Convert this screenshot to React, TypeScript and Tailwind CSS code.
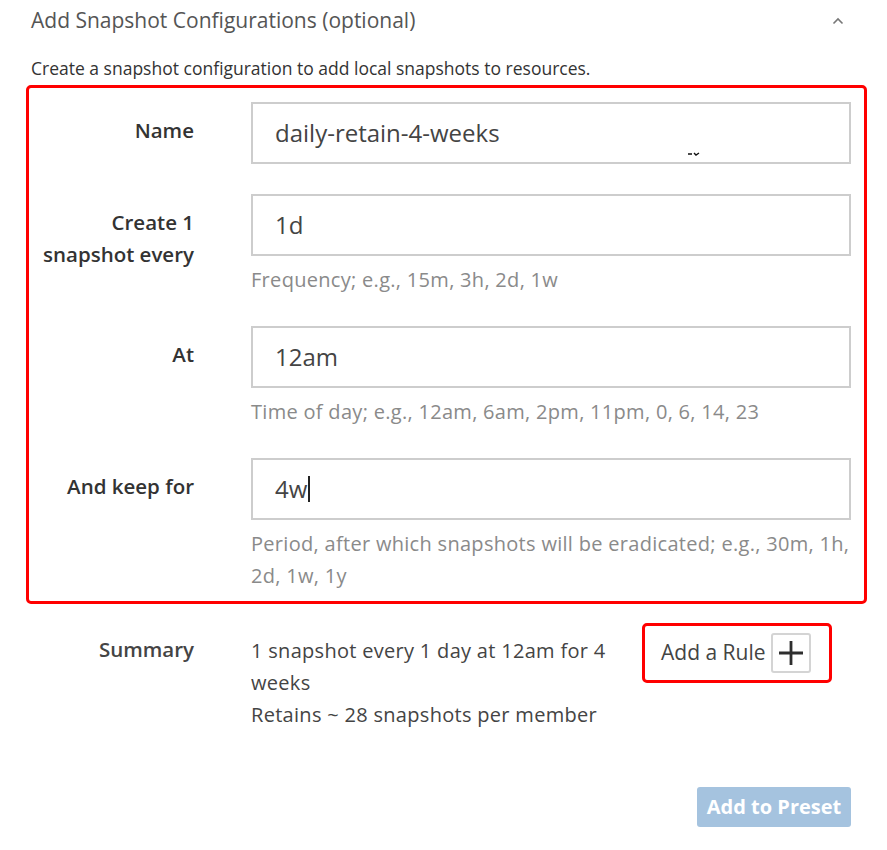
import React from "react"

const font = { fontFamily: "'Open Sans', 'Liberation Sans', sans-serif" }

function Field({
  label,
  value,
  help,
  caret,
  cursorMark,
}: {
  label: React.ReactNode
  value: string
  help?: React.ReactNode
  caret?: boolean
  cursorMark?: boolean
}) {
  return (
    <div className="flex">
      <div className="w-[165px] shrink-0 pt-[12px] text-right text-[20.5px] font-semibold leading-[32px] text-[#333]">
        {label}
      </div>
      <div className="ml-[57px] w-[600px]">
        <div className="relative flex h-[62px] items-center border-2 border-[#cdcdcd] bg-white pl-[22px] text-[24px] text-[#444]">
          <span>{value}</span>
          {caret && <span className="ml-[1px] inline-block h-[26px] w-[2px] bg-[#222]" />}
          {cursorMark && (
            <svg className="absolute left-[434px] top-[47px]" width="14" height="6" viewBox="0 0 14 6">
              <path d="M1 3h4M7 2l2 2 3-2" stroke="#111" strokeWidth="1.4" fill="none" />
            </svg>
          )}
        </div>
        {help && <div className="mt-[8px] text-[20px] leading-[32px] tracking-[0.3px] text-[#8a8a8a]">{help}</div>}
      </div>
    </div>
  )
}

export default function App() {
  return (
    <div className="min-h-[850px] w-[887px] bg-white" style={font}>
      {/* Header */}
      <div className="flex h-[42px] items-center justify-between pl-[31px] pr-[43px]">
        <div className="text-[21px] text-[#555]">Add Snapshot Configurations (optional)</div>
        <svg width="12" height="8" viewBox="0 0 12 8">
          <path d="M1.5 6.5L6 2l4.5 4.5" stroke="#777" strokeWidth="1.6" fill="none" />
        </svg>
      </div>
      <div className="mt-[15px] pl-[31px] text-[17.5px] leading-[22px] text-[#333]">
        Create a snapshot configuration to add local snapshots to resources.
      </div>

      {/* Rule form */}
      <div className="ml-[26px] mt-[6px] flex w-[841px] flex-col gap-[30px] rounded-[5px] border-[3px] border-[#ff0000] pb-[9px] pt-[14px]">
        <Field label="Name" value="daily-retain-4-weeks" cursorMark />
        <Field
          label={
            <>
              Create 1
              <br />
              snapshot every
            </>
          }
          value="1d"
          help="Frequency; e.g., 15m, 3h, 2d, 1w"
        />
        <Field label="At" value="12am" help="Time of day; e.g., 12am, 6am, 2pm, 11pm, 0, 6, 14, 23" />
        <Field
          label="And keep for"
          value="4w"
          caret
          help={
            <>
              Period, after which snapshots will be eradicated; e.g., 30m, 1h,
              <br />
              2d, 1w, 1y
            </>
          }
        />
      </div>

      {/* Summary */}
      <div className="mt-[19px] flex">
        <div className="w-[194px] shrink-0 pt-[10px] text-right text-[20.5px] font-semibold leading-[32px] text-[#444]">
          Summary
        </div>
        <div className="ml-[57px] w-[370px] pt-[12px] text-[20px] leading-[32px] tracking-[0.3px] text-[#444]">
          1 snapshot every 1 day at 12am for 4
          <br />
          weeks
          <br />
          Retains ~ 28 snapshots per member
        </div>
        <div className="ml-[21px] flex h-[60px] w-[190px] items-center rounded-[5px] border-[3px] border-[#ff0000] pl-[16px]">
          <span className="text-[21px] text-[#444]">Add a Rule</span>
          <button className="ml-[5px] flex h-[40px] w-[40px] items-center justify-center rounded-[3px] border-2 border-[#d4d4d4] bg-white">
            <svg width="26" height="26" viewBox="0 0 26 26">
              <path d="M13 1v24M1 13h24" stroke="#2e2e2e" strokeWidth="2.8" />
            </svg>
          </button>
        </div>
      </div>

      {/* Footer */}
      <div className="mt-[56px] flex justify-end pr-[36px]">
        <button className="h-[40px] w-[154px] rounded-[3px] bg-[#a5c3df] text-[20px] font-bold text-white">
          Add to Preset
        </button>
      </div>
    </div>
  )
}
